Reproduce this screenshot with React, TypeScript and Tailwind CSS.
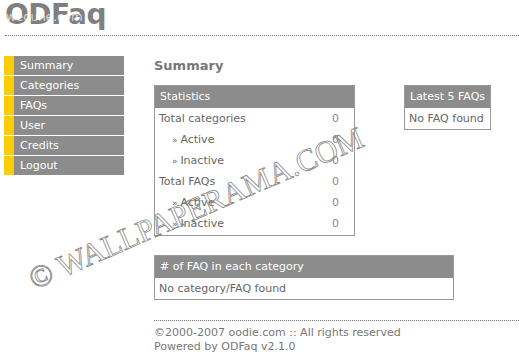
import React from "react";

const font = "font-['DejaVu_Sans',Verdana,sans-serif]";

function Box({ title, width, children }: { title: string; width: string; children: React.ReactNode }) {
  return (
    <div className={`${width} border border-[#999] bg-white`}>
      <div className="h-[22px] bg-[#8c8c8c] pl-[5px] text-[11px] leading-[22px] text-white">{title}</div>
      {children}
    </div>
  );
}

const rows: [string, boolean][] = [
  ["Total categories", false],
  ["Active", true],
  ["Inactive", true],
  ["Total FAQs", false],
  ["Active", true],
  ["Inactive", true],
];

const menu = ["Summary", "Categories", "FAQs", "User", "Credits", "Logout"];

export default function App() {
  return (
    <div className={`relative h-[355px] w-[519px] overflow-hidden bg-white ${font} text-[11px] text-[#666]`}>
      {/* header */}
      <div className="relative h-[35px] pl-[5px]">
        <div className="text-[28px] font-bold leading-[30px] tracking-[-0.5px] text-[#7f7f7f]">ODFaq</div>
        <div className="absolute left-[6px] top-[8px] text-[12px] text-white/70">weoune.com</div>
      </div>
      <div className="ml-[5px] border-t border-dotted border-[#777]" />

      <div className="flex pt-[20px]">
        {/* sidebar */}
        <div className="ml-[4px] flex w-[120px] flex-col gap-[1px]">
          {menu.map((m) => (
            <div key={m} className="flex h-[19px]">
              <div className="w-[10px] bg-[#ffcc00]" />
              <div className="flex-1 bg-[#8c8c8c] pl-[6px] text-[11px] leading-[19px] text-white">{m}</div>
            </div>
          ))}
        </div>

        {/* main */}
        <div className="ml-[30px] flex flex-1 flex-col">
          <div className="mt-[2px] text-[13px] font-bold leading-[16px] text-[#777]">Summary</div>
          <div className="mt-[11px] flex items-start">
            <Box title="Statistics" width="w-[201px]">
              <div className="pb-[1px]">
                {rows.map(([label, indent], i) => (
                  <div key={i} className="flex h-[21px] items-center justify-between pr-[15px] leading-[21px]">
                    <span className={indent ? "pl-[17px]" : "pl-[4px]"}>
                      {indent ? <span className="text-[9px]">» </span> : null}
                      {label}
                    </span>
                    <span className="text-[#888]">0</span>
                  </div>
                ))}
              </div>
            </Box>
            <div className="ml-[49px]">
              <Box title="Latest 5 FAQs" width="w-[87px]">
                <div className="h-[21px] pl-[4px] leading-[21px]">No FAQ found</div>
              </Box>
            </div>
          </div>
          <div className="mt-[19px]">
            <Box title="# of FAQ in each category" width="w-[300px]">
              <div className="h-[21px] pl-[4px] leading-[21px]">No category/FAQ found</div>
            </Box>
          </div>
          <div className="mt-[20px] border-t border-dotted border-[#777]" />
          <div className="pt-[5px] text-[11px] leading-[14px] text-[#777]">
            <div>©2000-2007 oodie.com :: All rights reserved</div>
            <div>Powered by ODFaq v2.1.0</div>
          </div>
        </div>
      </div>

      {/* watermark */}
      <div className="pointer-events-none absolute left-[196px] top-[208px] -translate-x-1/2 -translate-y-1/2 -rotate-[23.5deg] whitespace-nowrap font-['Liberation_Serif',serif] text-[31px] leading-none text-transparent [-webkit-text-stroke:0.8px_#8a8a8a]">
        © WALLPAPERAMA.COM
      </div>
    </div>
  );
}
